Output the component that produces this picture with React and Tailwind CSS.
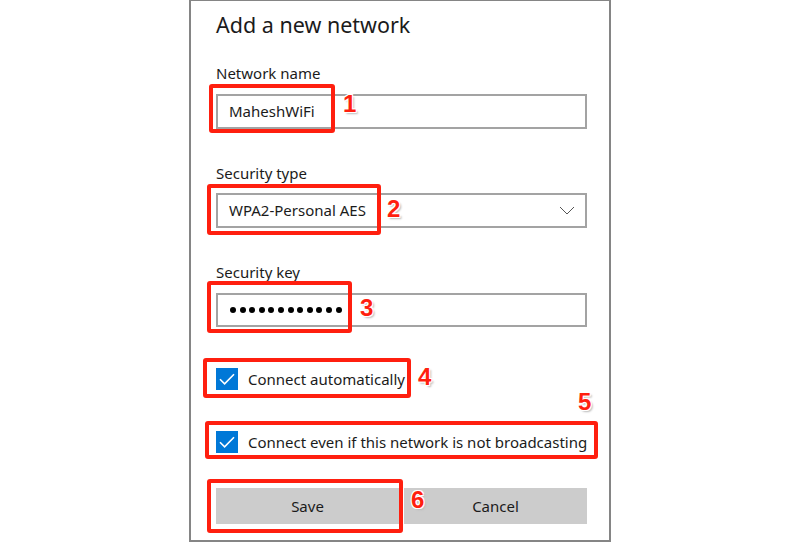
import React from 'react';

const font = { fontFamily: '"Noto Sans", "Open Sans", sans-serif' };

const Marker = ({ className }) => (
  <div className={`absolute border-[4px] border-[#ff1f0f] rounded-[3px] pointer-events-none ${className}`} />
);

const Num = ({ n, className }) => (
  <span
    className={`absolute text-[24px] font-bold leading-none text-[#ff1f0f] [font-family:'Liberation_Sans',Arial,sans-serif] [text-shadow:1px_1px_0_#fff,-1px_-1px_0_#fff,1px_-1px_0_#fff,-1px_1px_0_#fff,2px_2px_2px_#bbb] ${className}`}
  >
    {n}
  </span>
);

const Check = () => (
  <span className="w-[22px] h-[22px] bg-[#0078d7] flex items-center justify-center shrink-0">
    <svg width="16" height="12" viewBox="0 0 16 12" fill="none">
      <path d="M1 6.2 L5.6 10.8 L15 1.2" stroke="#fff" strokeWidth="1.6" />
    </svg>
  </span>
);

export default function App() {
  return (
    <div className="w-full h-[542px] bg-white" style={font}>
      <div className="mx-auto w-[422px] h-[542px] border-2 border-[#858585] border-t-[1px] pl-[25px] pr-[22px] flex flex-col text-[#1b1b1b]">
        <h1 className="mt-[8px] text-[21.5px] leading-[32px] font-normal">Add a new network</h1>

        <label className="mt-[22px] text-[15px] leading-[20px]">Network name</label>
        <div className="relative mt-[11px]">
          <div className="h-[35px] border-2 border-[#a3a3a3] flex items-center pl-[11px] text-[15px]">MaheshWiFi</div>
          <Marker className="left-[-7px] top-[-10px] w-[126px] h-[49px]" />
          <Num n="1" className="left-[127px] top-[-2px]" />
        </div>

        <label className="mt-[34px] text-[15px] leading-[20px]">Security type</label>
        <div className="relative mt-[10px]">
          <div className="h-[35px] border-2 border-[#a3a3a3] flex items-center justify-between pl-[11px] pr-[10px] text-[15px]">
            <span>WPA2-Personal AES</span>
            <svg width="16" height="9" viewBox="0 0 16 9" fill="none">
              <path d="M1 1 L8 8 L15 1" stroke="#555" strokeWidth="1" />
            </svg>
          </div>
          <Marker className="left-[-9px] top-[-9px] w-[174px] h-[51px]" />
          <Num n="2" className="left-[171px] top-[4px]" />
        </div>

        <label className="mt-[34px] text-[15px] leading-[20px]">Security key</label>
        <div className="relative mt-[11px]">
          <div className="h-[34px] border-2 border-[#a3a3a3] flex items-center pl-[12px] gap-[3.6px]">
            {Array.from({ length: 12 }).map((_, i) => (
              <span key={i} className="w-[6px] h-[6px] rounded-full bg-black" />
            ))}
          </div>
          <Marker className="left-[-9px] top-[-12px] w-[145px] h-[52px]" />
          <Num n="3" className="left-[144px] top-[3px]" />
        </div>

        <div className="relative mt-[41px] flex items-center gap-[10px] text-[15px] leading-[22px]">
          <Check />
          <span>Connect automatically</span>
          <Marker className="left-[-13px] top-[-10px] w-[208px] h-[40px]" />
          <Num n="4" className="left-[202px] top-[-3px]" />
        </div>

        <div className="relative mt-[41px] flex items-center gap-[10px] text-[15px] leading-[22px] whitespace-nowrap">
          <Check />
          <span>Connect even if this network is not broadcasting</span>
          <Marker className="left-[-11px] top-[-10px] w-[393px] h-[38px]" />
          <Num n="5" className="left-[362px] top-[-41px]" />
        </div>

        <div className="relative mt-[35px] flex gap-[5px] text-[15px]">
          <button className="flex-1 h-[36px] bg-[#cccccc]">Save</button>
          <button className="flex-1 h-[36px] bg-[#cccccc]">Cancel</button>
          <Marker className="left-[-9px] top-[-9px] w-[196px] h-[54px]" />
          <Num n="6" className="left-[195px] top-[0px]" />
        </div>
      </div>
    </div>
  );
}
